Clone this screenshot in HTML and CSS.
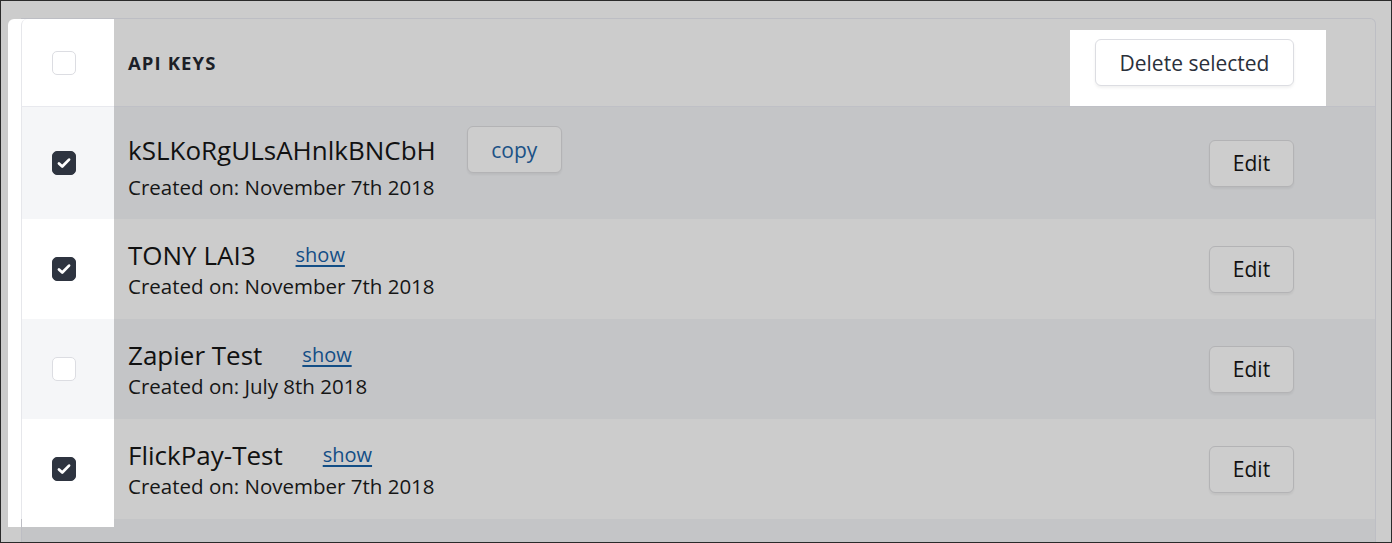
FILE: index.html
```html
<!DOCTYPE html>
<html lang="en">
<head>
    <meta charset="UTF-8">
    <title>API keys</title>
    <link rel="stylesheet" href="styles.css">
</head>
<body>

<div class="frame">
    <div class="card">

        <!-- header -->
        <div class="row head">
            <div class="check-cell"><span class="box"></span></div>
            <div class="title-cell">API KEYS</div>
            <div class="action-cell">
                <div class="spot">
                    <button class="btn btn-delete">Delete selected</button>
                </div>
            </div>
        </div>

        <div class="row striped first">
            <div class="check-cell">
                <span class="box checked"><svg viewBox="0 0 24 24"><path d="M6.5 12.5l3.6 3.4 7.4-7.6"/></svg></span>
            </div>
            <div class="key-cell">
                <div class="key-line">
                    <span class="key-name">kSLKoRgULsAHnlkBNCbH</span>
                    <button class="btn btn-copy">copy</button>
                </div>
                <div class="created">Created on: November 7th 2018</div>
            </div>
            <div class="action-cell"><button class="btn btn-edit">Edit</button></div>
        </div>

        <div class="row">
            <div class="check-cell">
                <span class="box checked"><svg viewBox="0 0 24 24"><path d="M6.5 12.5l3.6 3.4 7.4-7.6"/></svg></span>
            </div>
            <div class="key-cell">
                <div class="key-line">
                    <span class="key-name">TONY LAI3</span>
                    <a class="show" href="#">show</a>
                </div>
                <div class="created">Created on: November 7th 2018</div>
            </div>
            <div class="action-cell"><button class="btn btn-edit">Edit</button></div>
        </div>

        <div class="row striped">
            <div class="check-cell"><span class="box"></span></div>
            <div class="key-cell">
                <div class="key-line">
                    <span class="key-name">Zapier Test</span>
                    <a class="show" href="#">show</a>
                </div>
                <div class="created">Created on: July 8th 2018</div>
            </div>
            <div class="action-cell"><button class="btn btn-edit">Edit</button></div>
        </div>

        <div class="row">
            <div class="check-cell">
                <span class="box checked"><svg viewBox="0 0 24 24"><path d="M6.5 12.5l3.6 3.4 7.4-7.6"/></svg></span>
            </div>
            <div class="key-cell">
                <div class="key-line">
                    <span class="key-name">FlickPay-Test</span>
                    <a class="show" href="#">show</a>
                </div>
                <div class="created">Created on: November 7th 2018</div>
            </div>
            <div class="action-cell"><button class="btn btn-edit">Edit</button></div>
        </div>

        <!-- next row, cut off by the window -->
        <div class="row striped tail">
            <div class="check-cell"></div>
            <div class="key-cell"></div>
            <div class="action-cell"></div>
        </div>

    </div>
</div>

</body>
</html>
```

FILE: styles.css
```css
* {
    box-sizing: border-box;
}

body {
    margin: 0;
    font-family: "Open Sans", "Lato", sans-serif;
    color: #141414;
}

/* window frame, dimmed by the tour overlay */
.frame {
    width: 1392px;
    height: 543px;
    border: 1px solid #2a2a2a;
    background-color: #cccccc;
    padding: 17px 15px 0 20px;
    overflow: hidden;
}

.card {
    border: 1px solid #bdbec4;
    border-left: none;
    border-radius: 0 6px 0 0;
    background-color: #cccccc;
}

.row {
    display: grid;
    grid-template-columns: 93px 1fr auto;
    min-height: 100px;
}
.row.striped { background-color: #c4c5c7; }
.row.first { min-height: 112px; }
.row.tail { min-height: 40px; }

/* highlighted checkbox column */
.check-cell {
    display: flex;
    align-items: center;
    padding-left: 30px;
    background-color: #fff;
    border-left: 1px solid #e6e7eb;
    box-shadow: -13px 0 0 #fff;
}
.row.striped .check-cell { background-color: #f5f6f8; }
.row.tail .check-cell {
    background: linear-gradient(#fff 8px, transparent 8px);
    box-shadow: none;
    border-left-color: #bdbec4;
    position: relative;
}
.row.tail .check-cell::before {
    content: "";
    position: absolute;
    left: -14px;
    top: 0;
    width: 13px;
    height: 8px;
    background-color: #fff;
}
.row.head .check-cell {
    border-radius: 6px 0 0 0;
    border-bottom: 1px solid #e8e9ee;
}

.box {
    display: flex;
    align-items: center;
    justify-content: center;
    width: 24px;
    height: 24px;
    border: 1px solid #dcdde2;
    border-radius: 5px;
    background-color: #fff;
}
.box.checked {
    background-color: #2e3440;
    border-color: #2e3440;
}
.box svg {
    width: 22px;
    height: 22px;
    fill: none;
    stroke: #fff;
    stroke-width: 3;
    stroke-linecap: round;
    stroke-linejoin: round;
}

/* header */
.row.head {
    min-height: 88px;
}
.row.head .title-cell,
.row.head .action-cell {
    border-bottom: 1px solid #bfc0c6;
}
.title-cell {
    display: flex;
    align-items: center;
    padding-left: 14px;
    font-size: 18.5px;
    font-weight: 700;
    letter-spacing: 1.1px;
    color: #1c1f27;
}
.row.head .action-cell {
    align-items: flex-end;
    padding-right: 49px;
}
.spot {
    background-color: #fff;
    padding: 9px 32px 20px 25px;
}

.key-cell {
    display: flex;
    flex-direction: column;
    justify-content: center;
    padding-left: 14px;
}
.key-line {
    display: flex;
    align-items: center;
    height: 30px;
}
.row.first .key-line { height: 47px; }
.key-name {
    font-size: 26px;
    color: #111;
}
.created {
    font-size: 20.5px;
    line-height: 26px;
    margin-top: 3px;
    color: #161616;
}
.row.first .created { margin-top: 1px; }

.show {
    margin-left: 40px;
    font-size: 20px;
    color: #134e86;
    text-decoration-thickness: 2px;
    text-underline-offset: 3px;
}

.action-cell {
    display: flex;
    align-items: center;
    justify-content: flex-end;
    padding-right: 81px;
}

.btn {
    height: 47px;
    font-family: inherit;
    font-size: 21px;
    border-radius: 6px;
    cursor: pointer;
}
.btn-edit,
.btn-copy {
    border: 1px solid #b3b3b5;
    background-color: #cdcdcd;
    color: #111;
    box-shadow: 0 2px 2px rgba(0,0,0,0.05);
}
.btn-edit { width: 85px; }
.btn-copy {
    width: 95px;
    margin-left: 31px;
    color: #1b5286;
}
.btn-delete {
    width: 199px;
    border: 1px solid #dcdde2;
    background-color: #fff;
    color: #2b303b;
    box-shadow: 0 2px 3px rgba(0,0,0,0.06);
}
```
